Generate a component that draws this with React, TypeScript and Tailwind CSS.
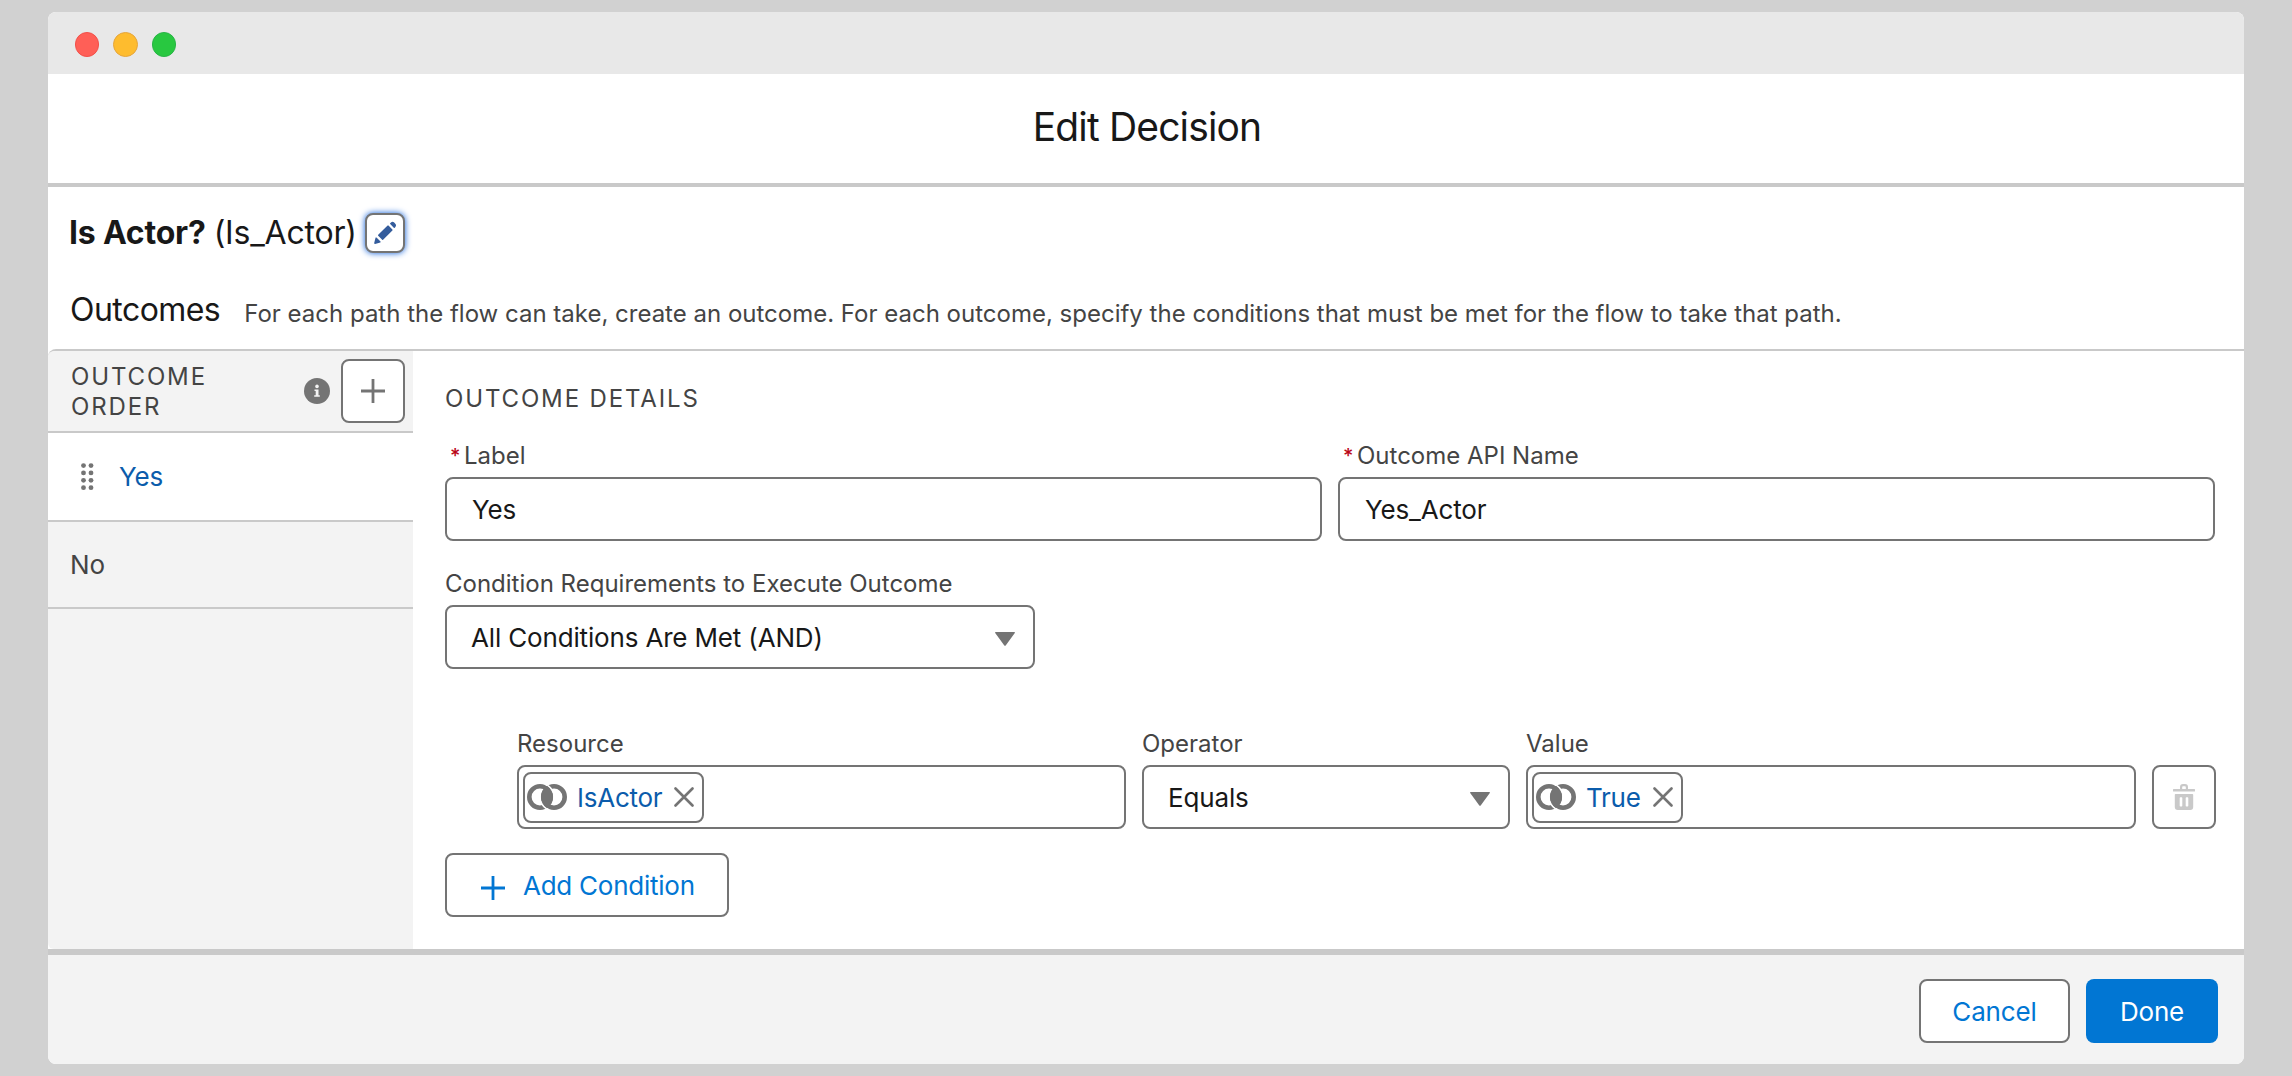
import type { ReactNode } from "react"

const PlusIcon = ({ className }: { className?: string }) => (
  <svg viewBox="0 0 24 24" className={className} fill="none" stroke="currentColor" strokeWidth="2.8">
    <path d="M12 0v24M0 12h24" />
  </svg>
)

const CloseIcon = () => (
  <svg viewBox="0 0 20 20" className="h-5 w-5 shrink-0 text-[#747474]" fill="none" stroke="currentColor" strokeWidth="2.6" strokeLinecap="round">
    <path d="M1.5 1.5l17 17M18.5 1.5l-17 17" />
  </svg>
)

const PencilIcon = () => (
  <svg viewBox="0 0 24 24" className="h-6 w-6" fill="#345c9c">
    <path d="M2.600 16.600c.3-.3.600-.3.900 0l4 4c.3.3.2.700-.2.800l-5.200 1.500c-.600.2-1-.3-.9-.9z" />
    <path d="M5.200 13.800L14.600 4.600c.3-.3.6-.3.9 0l3.900 3.900c.3.3.3.600 0 .9L10.100 18.700c-.3.3-.600.3-.9 0l-4-4c-.3-.3-.3-.6 0-.9z" />
    <path d="M17.200 2.200l.8-.7c1-1 2.300-.8 3.200.1l1.100 1.200c.9.9 1 2.200.1 3.100l-.7.800c-.3.3-.600.3-.9 0L17.200 3.100c-.3-.3-.3-.600 0-.9z" />
  </svg>
)

const InfoIcon = () => (
  <svg viewBox="0 0 26 26" className="h-[26px] w-[26px] shrink-0">
    <circle cx="13" cy="13" r="13" fill="#747474" />
    <circle cx="13" cy="8.400" r="1.800" fill="#f3f3f3" />
    <path d="M10.500 11.500h4v5.700h1.300v1.500h-5.600v-1.500h1.500V13h-1.200z" fill="#f3f3f3" />
  </svg>
)

const GripIcon = () => (
  <svg viewBox="0 0 13 28" className="h-7 w-[13px]" fill="#747474">
    {[2.6, 9.9, 17.3, 24.7].map((y) => (
      <g key={y}>
        <circle cx="2.500" cy={y} r="2.400" />
        <circle cx="10" cy={y} r="2.400" />
      </g>
    ))}
  </svg>
)

// two overlapping rings, the shared part is filled
const BooleanIcon = () => (
  <svg viewBox="0 0 40 26" className="h-[26px] w-10 shrink-0" fill="none">
    <circle cx="13" cy="13" r="10.7" stroke="#747474" strokeWidth="4.600" />
    <circle cx="27" cy="13" r="10.7" stroke="#747474" strokeWidth="4.600" />
    <path d="M18.800.500A13.800 13.800 0 0 1 26 8.300M21.200 25.500A13.800 13.800 0 0 1 14 17.700" stroke="#fff" strokeWidth="1.700" />
    <path d="M20 2A13 13 0 0 1 20 24A13 13 0 0 1 20 2z" fill="#747474" />
  </svg>
)

const TrashIcon = () => (
  <svg viewBox="0 0 22 26" className="h-[26px] w-[22px]" fill="#c9c9c9">
    <path d="M7 5V3a3 3 0 0 1 3-3h2a3 3 0 0 1 3 3v2h6.400c.4 0 .6.2.6.600v1.400c0 .4-.2.600-.6.600H.6c-.4 0-.6-.2-.6-.600V5.600C0 5.200.2 5 .6 5zm2.200 0h3.600V3c0-.5-.3-.8-.8-.8h-2c-.5 0-.8.3-.8.8z" />
    <path fillRule="evenodd" d="M2.500 10h17c.4 0 .7.300.7.700V23a3 3 0 0 1-3 3H4.800a3 3 0 0 1-3-3V10.700c0-.4.3-.7.7-.7zM7.400 13.200c-.400 0-.700.3-.700.7v7.800c0 .4.3.7.700.7h1.200c.4 0 .7-.3.7-.7v-7.800c0-.4-.3-.7-.7-.7zm6 0c-.400 0-.700.3-.700.7v7.800c0 .4.3.7.700.7h1.200c.4 0 .7-.3.7-.7v-7.800c0-.4-.3-.7-.7-.7z" />
  </svg>
)

const Caret = () => (
  <svg viewBox="0 0 20 14" className="mt-[3px] h-[14px] w-5 shrink-0" fill="#747474">
    <path d="M.8 0h18.400c.7 0 1 .6.600 1.100L10.700 13.400c-.4.5-1 .5-1.400 0L.2 1.100C-.2.600.1 0 .8 0z" />
  </svg>
)

const Label = ({ children, required }: { children: ReactNode; required?: boolean }) => (
  <div className="flex h-[30px] items-center pt-[2px] text-[24px] leading-[30px] text-[#444444]">
    {required && <span className="ml-[5px] w-[14px] text-[20px] font-medium text-[#ba0517]">*</span>}
    <span>{children}</span>
  </div>
)

const Box = ({ children, className = "" }: { children: ReactNode; className?: string }) => (
  <div className={`flex h-16 items-center rounded-lg border-2 border-[#747474] bg-white text-[26px] tracking-[-0.16px] text-[#181818] ${className}`}>
    {children}
  </div>
)

const Pill = ({ children }: { children: ReactNode }) => (
  <div className="ml-1 flex h-[51px] items-center rounded-lg border-2 border-[#747474] pr-2 pl-[2px] text-[26px] text-[#0b5cab]">
    <BooleanIcon />
    <span className="mr-3 ml-[10px] tracking-[-0.25px]">{children}</span>
    <CloseIcon />
  </div>
)

const App = () => {
  return (
    <div className="h-[1076px] w-[2292px] bg-[#d1d1d1] px-12 py-3 font-['Inter',sans-serif] text-[#181818]">
      <div className="flex h-[1052px] flex-col overflow-hidden rounded-lg bg-white">
        <div className="flex h-[62px] shrink-0 items-center gap-[14px] bg-[#e8e8e8] pt-[3px] pl-[26.5px]">
          <span className="h-[24.6px] w-[24.6px] rounded-full border border-[#f2504a] bg-[#ff5f57]" />
          <span className="h-[24.6px] w-[24.6px] rounded-full border border-[#e5a53c] bg-[#febc2e]" />
          <span className="h-[24.6px] w-[24.6px] rounded-full border border-[#28b446] bg-[#28c840]" />
        </div>

        <div className="flex h-[113px] shrink-0 items-center justify-center border-b-4 border-[#c9c9c9] pb-[2px] pl-[2px]">
          <h1 className="text-[39px] tracking-[-0.85px]">Edit Decision</h1>
        </div>

        <div className="flex h-[162px] shrink-0 flex-col pt-[26px]">
          <div className="flex h-10 items-center pl-[21px] text-[32px]">
            <span className="pb-px font-bold tracking-[-0.2px]">Is Actor?</span>
            <span className="ml-2 pb-px tracking-[-0.2px]">(Is_Actor)</span>
            <button className="ml-2 flex h-10 w-10 items-center justify-center rounded-lg border-2 border-[#747474] bg-white shadow-[0_0_6px_#0b5cd8]">
              <PencilIcon />
            </button>
          </div>
          <div className="mt-[37px] flex h-10 items-start pl-[22px]">
            <h2 className="text-[32px] leading-10 tracking-[-0.55px]">Outcomes</h2>
            <p className="mt-1 ml-6 text-[24px] leading-10 text-[#444444]">
              For each path the flow can take, create an outcome. For each outcome, specify the conditions that must be met for the flow to take that path.
            </p>
          </div>
        </div>

        <div className="flex h-[600px] shrink-0 rounded-l-lg border-t-2 border-[#c9c9c9]">
          <aside className="w-[365px] shrink-0 overflow-hidden rounded-l-md bg-[#f3f3f3]">
            <div className="flex h-[82px] items-center border-b-2 border-[#c9c9c9] pr-2 pl-[23px]">
              <h3 className="w-[160px] flex-1 pt-[2px] text-[24px] leading-[30px] tracking-[1.85px] text-[#444444]">
                OUTCOME
                <br />
                ORDER
              </h3>
              <InfoIcon />
              <button className="ml-[11px] flex h-16 w-16 items-center justify-center rounded-lg border-2 border-[#747474] bg-white text-[#747474]">
                <PlusIcon className="h-6 w-6" />
              </button>
            </div>
            <div className="flex h-[89px] items-center border-b-2 border-[#c9c9c9] bg-white pl-[33px] text-[26px] text-[#0b5cab]">
              <GripIcon />
              <span className="ml-[25px] tracking-[-0.16px]">Yes</span>
            </div>
            <div className="flex h-[87px] items-center border-b-2 border-[#c9c9c9] pl-[22px] text-[26px] text-[#444444]">No</div>
          </aside>

          <main className="flex-1 pt-[33px] pr-[29px] pl-8">
            <h3 className="h-[30px] text-[24px] leading-[30px] tracking-[1.85px] text-[#444444]">OUTCOME DETAILS</h3>
            <div className="mt-[26px] grid grid-cols-2 gap-4">
              <div>
                <Label required>Label</Label>
                <Box className="mt-[7px] pl-[25px]">Yes</Box>
              </div>
              <div>
                <Label required>Outcome API Name</Label>
                <Box className="mt-[7px] pl-[25px]">Yes_Actor</Box>
              </div>
            </div>

            <div className="mt-[27px] w-[590px]">
              <Label>Condition Requirements to Execute Outcome</Label>
              <Box className="mt-[7px] justify-between pr-[18px] pl-6">
                All Conditions Are Met (AND)
                <Caret />
              </Box>
            </div>

            <div className="mt-[59px] mr-[-1px] ml-[72px] flex items-end gap-4">
              <div className="w-[609px]">
                <Label>Resource</Label>
                <Box className="mt-[7px]">
                  <Pill>IsActor</Pill>
                </Box>
              </div>
              <div className="w-[368px]">
                <Label>Operator</Label>
                <Box className="mt-[7px] justify-between pr-[18px] pl-6">
                  Equals
                  <Caret />
                </Box>
              </div>
              <div className="w-[610px]">
                <Label>Value</Label>
                <Box className="mt-[7px]">
                  <Pill>True</Pill>
                </Box>
              </div>
              <button className="flex h-16 w-16 items-center justify-center rounded-lg border-2 border-[#747474]">
                <TrashIcon />
              </button>
            </div>

            <button className="mt-6 flex h-16 w-[284px] items-center rounded-lg border-2 border-[#747474] pl-[34px] text-[26px] text-[#0176d3]">
              <PlusIcon className="mt-[5px] h-6 w-6" />
              <span className="ml-[18px] tracking-[-0.25px]">Add Condition</span>
            </button>
          </main>
        </div>

        <footer className="flex flex-1 justify-end gap-4 border-t-[6px] border-[#c9c9c9] bg-[#f3f3f3] pt-6 pr-[26px] text-[26px] tracking-[-0.16px]">
          <button className="h-16 w-[151px] rounded-lg border-2 border-[#747474] bg-white text-[#0176d3]">Cancel</button>
          <button className="h-16 w-[132px] rounded-lg bg-[#0176d3] text-white">Done</button>
        </footer>
      </div>
    </div>
  )
}

export default App
